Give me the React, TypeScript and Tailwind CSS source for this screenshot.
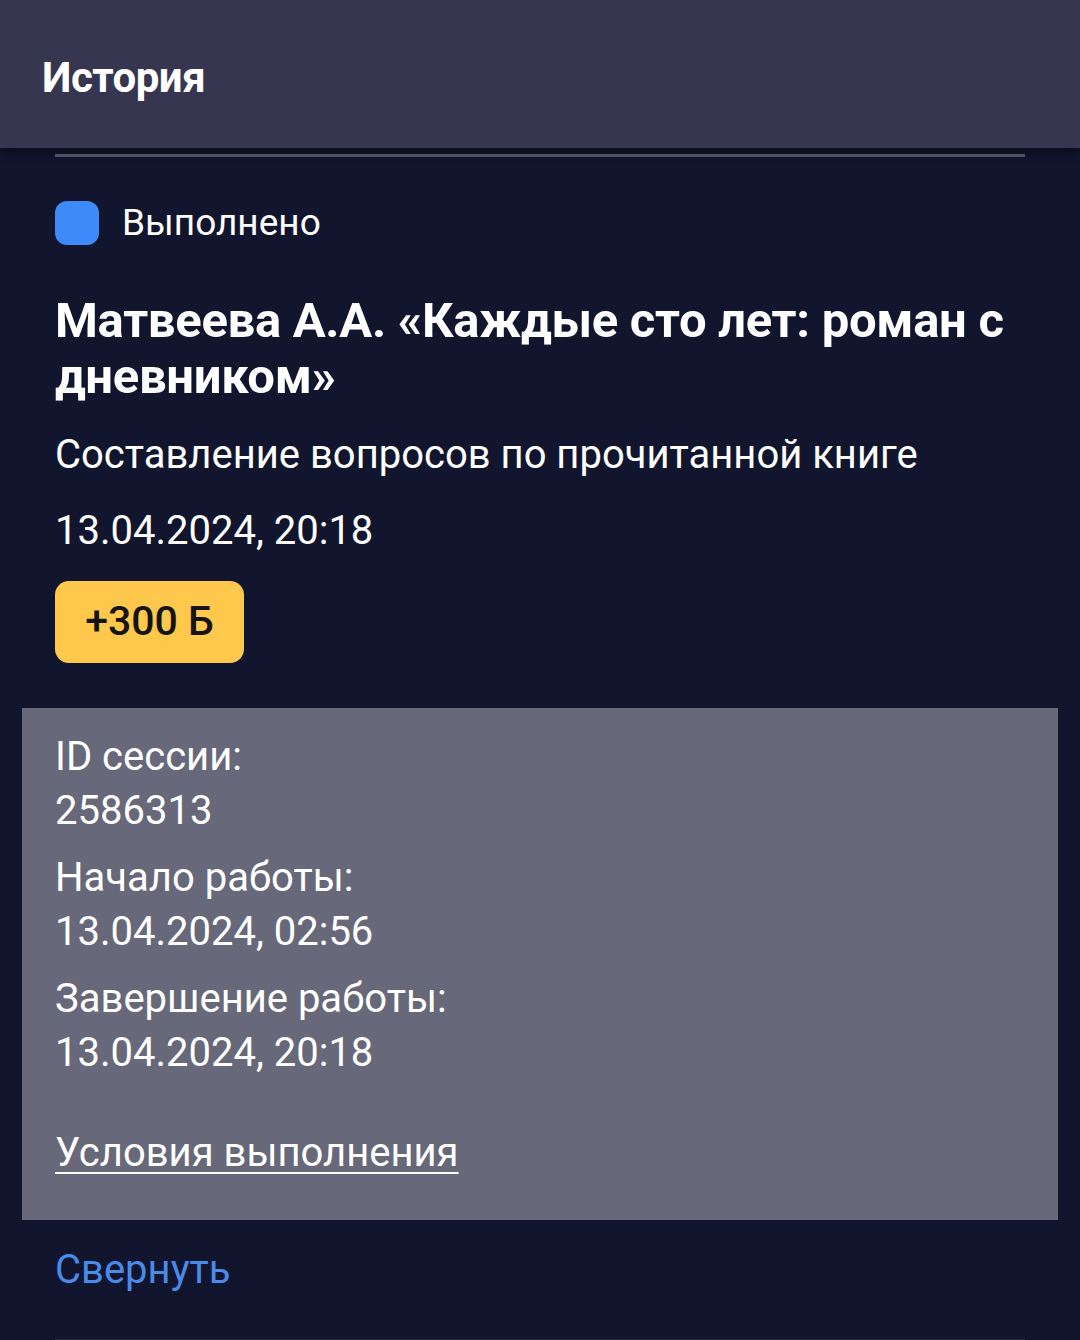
import React from "react";

const rows = [
  { label: "ID сессии:", value: "2586313" },
  { label: "Начало работы:", value: "13.04.2024, 02:56" },
  { label: "Завершение работы:", value: "13.04.2024, 20:18" },
];

export default function App() {
  return (
    <div className="min-h-[1340px] bg-[#11152d] text-white font-['Roboto',sans-serif] overflow-hidden">
      {/* Header */}
      <header className="relative z-10 h-[148px] bg-[#363650] flex items-center px-[42px] shadow-[0_4px_10px_rgba(0,0,0,0.45)]">
        <h1 className="text-[42px] font-bold tracking-[-0.5px] mt-[6px]">История</h1>
      </header>

      <div className="mx-[55px] mt-[6px] h-[3px] bg-[#5a5c70]" />

      <main className="px-[55px] pt-[44px]">
        <div className="flex items-center gap-[23px]">
          <span className="w-[44px] h-[44px] rounded-[12px] bg-[#3d8afa]" />
          <span className="text-[37px] leading-[40px]">Выполнено</span>
        </div>

        <h2 className="mt-[48px] text-[49px] leading-[56px] font-bold tracking-[-0.3px] pr-[20px]">
          Матвеева А.А. «Каждые сто лет: роман с дневником»
        </h2>

        <p className="mt-[28px] text-[40px] leading-[44px]">
          Составление вопросов по прочитанной книге
        </p>

        <p className="mt-[32px] text-[40px] leading-[44px]">13.04.2024, 20:18</p>

        <div className="mt-[28px] inline-flex items-center justify-center w-[189px] h-[82px] rounded-[14px] bg-[#fdc84b] text-[#141414] text-[41px] font-medium">
          +300 Б
        </div>
      </main>

      <section className="mx-[22px] mt-[45px] bg-[#676879] px-[33px] pt-[22px] pb-[40px]">
        <div className="flex flex-col gap-[13px]">
          {rows.map((r) => (
            <div key={r.label} className="text-[40px] leading-[54px]">
              <div>{r.label}</div>
              <div>{r.value}</div>
            </div>
          ))}
        </div>
        <a className="block mt-[46px] text-[40px] leading-[54px] underline underline-offset-[6px] decoration-[2px]">
          Условия выполнения
        </a>
      </section>

      <div className="px-[55px] pt-[25px] pb-[44px]">
        <span className="text-[40px] leading-[50px] text-[#4a8ae8]">Свернуть</span>
      </div>
      <div className="mx-[55px] h-[2px] bg-[#2a2d45]" />
    </div>
  );
}
